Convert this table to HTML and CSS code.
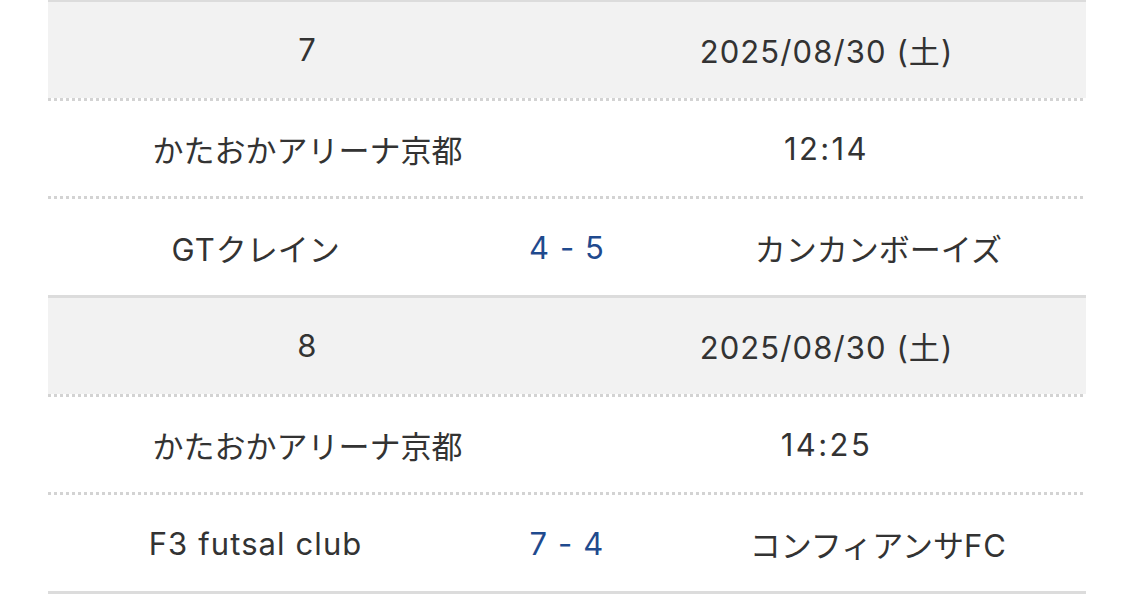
FILE: index.html
```html
<!DOCTYPE html>
<html lang="ja">
<head>
<meta charset="utf-8">
<link rel="stylesheet" href="styles.css">
</head>
<body>
<div class="schedule">
  <div class="match">
    <div class="row head two">
      <div class="cell lat">7</div>
      <div class="cell lat">2025/08/30 (土)</div>
    </div>
    <div class="sep"></div>
    <div class="row two">
      <div class="cell">かたおかアリーナ京都</div>
      <div class="cell lat wide">12:14</div>
    </div>
    <div class="sep"></div>
    <div class="row three">
      <div class="cell"><span class="lat">GT</span>クレイン</div>
      <div class="cell score lat">4 - 5</div>
      <div class="cell">カンカンボーイズ</div>
    </div>
  </div>
  <div class="match">
    <div class="row head two">
      <div class="cell lat">8</div>
      <div class="cell lat">2025/08/30 (土)</div>
    </div>
    <div class="sep"></div>
    <div class="row two">
      <div class="cell">かたおかアリーナ京都</div>
      <div class="cell lat wide">14:25</div>
    </div>
    <div class="sep"></div>
    <div class="row three">
      <div class="cell lat">F3 futsal club</div>
      <div class="cell score lat">7 - 4</div>
      <div class="cell">コンフィアンサ<span class="lat">FC</span></div>
    </div>
  </div>
  <div class="match end"></div>
</div>
</body>
</html>
```
FILE: styles.css
```css
html, body {
  margin: 0;
  padding: 0;
  background: #ffffff;
}

body {
  font-family: "Inter", "Noto Sans CJK JP", sans-serif;
  font-size: 31px;
  color: #333333;
  overflow: hidden;
}

.schedule {
  margin: -1px 0 0 48px;
  width: 1038px;
}

.match {
  border-top: 3px solid #dcdcdc;
}

.row {
  height: 95.67px;
  display: grid;
  align-items: center;
  text-align: center;
}

.row.head {
  background: #f2f2f2;
}

.row.two {
  grid-template-columns: 1fr 1fr;
}

.row.three {
  grid-template-columns: 40% 20% 40%;
}

.cell {
  white-space: nowrap;
}

.lat {
  letter-spacing: 1.1px;
}

.lat.wide {
  letter-spacing: 2.4px;
}

.score {
  color: #1f4a8e;
}

.sep {
  height: 3px;
  background: repeating-linear-gradient(90deg, #d3d3d3 0 3px, #ffffff 3px 6px);
}
```
